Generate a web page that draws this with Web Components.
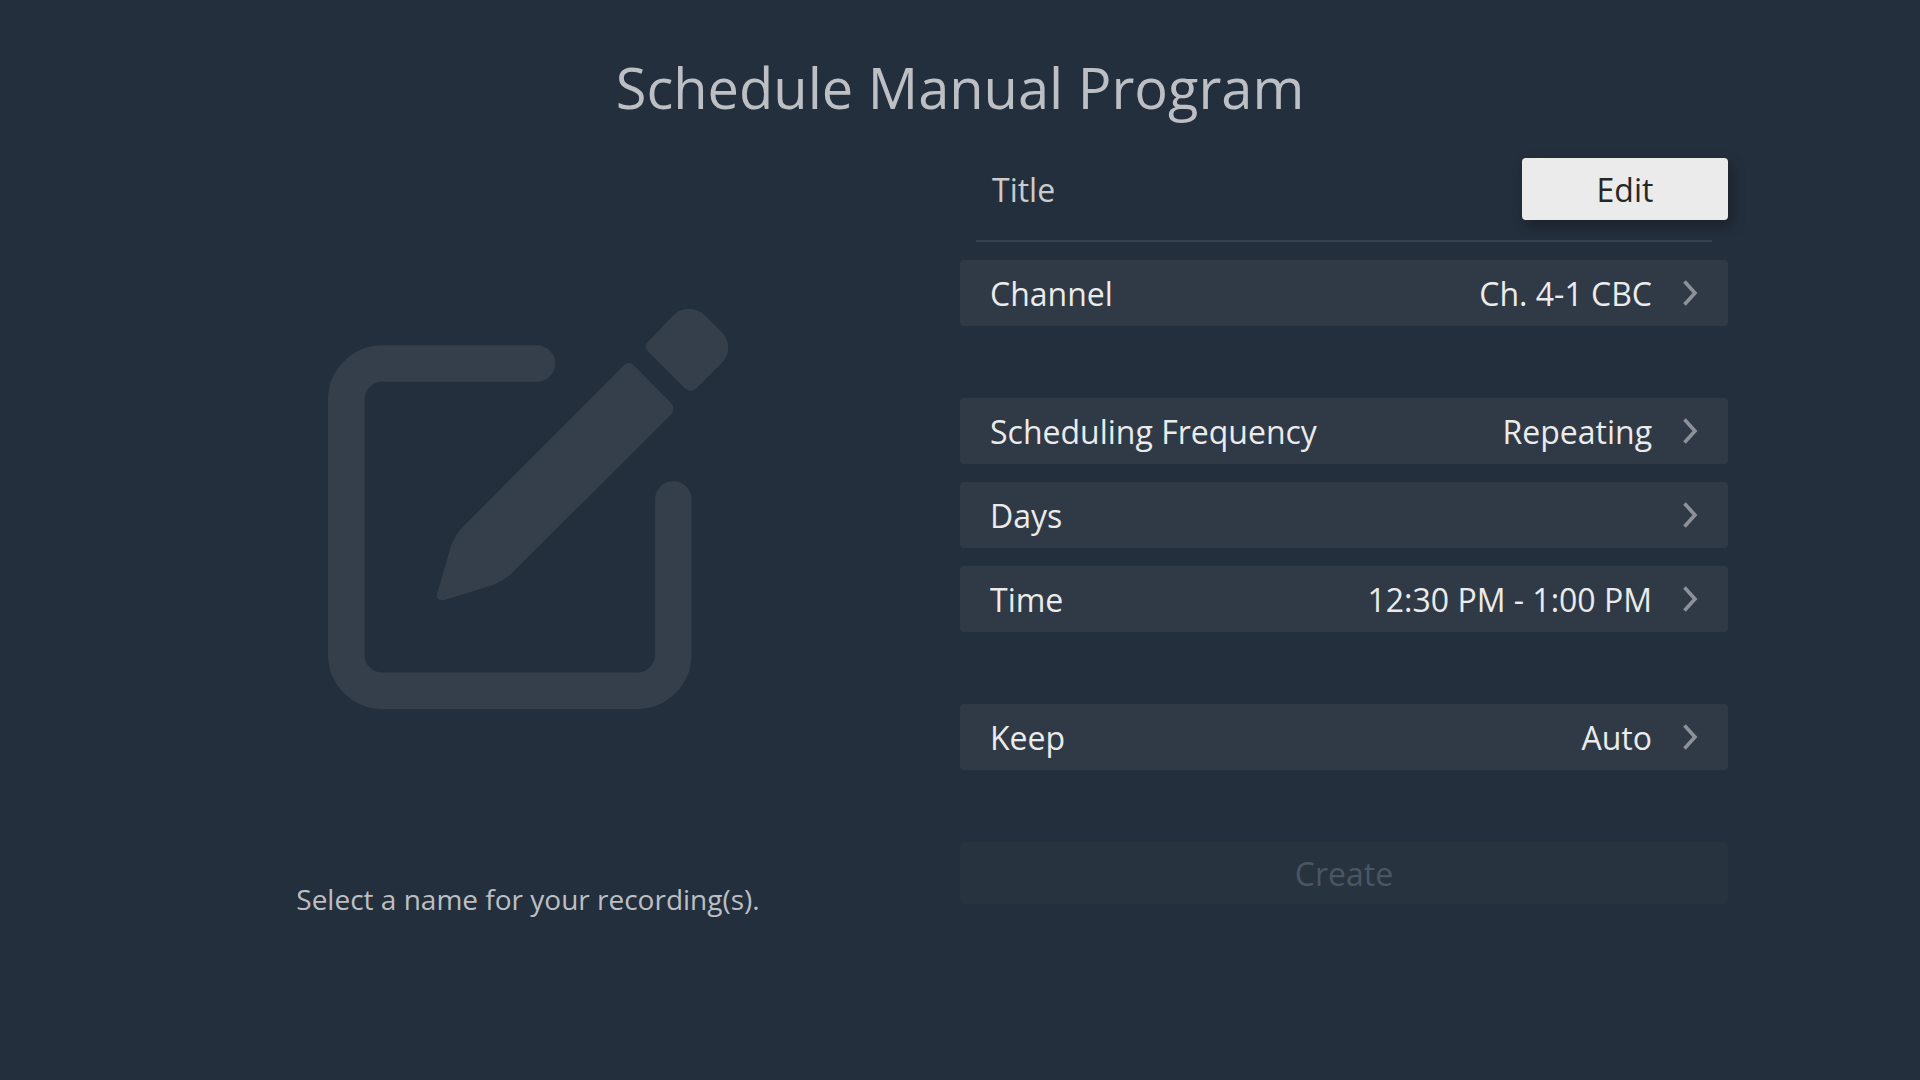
<!DOCTYPE html>
<html lang="en">
<head>
<meta charset="utf-8">
<meta name="viewport" content="width=device-width, initial-scale=1">
<title>Schedule Manual Program</title>
<style>
  html { background: #242f3d; }
  body {
    margin: 0;
    min-height: 100vh;
    font-family: "Open Sans", "Noto Sans", sans-serif;
    color: #ebebeb;
  }
</style>
</head>
<body>
<schedule-screen>
  <span slot="heading">Schedule Manual Program</span>
  <edit-art slot="aside"></edit-art>
  <span slot="hint">Select a name for your recording(s).</span>
  <title-field slot="form" action="Edit">Title</title-field>
  <option-group slot="form">
    <option-row value="Ch. 4-1 CBC">Channel</option-row>
  </option-group>
  <option-group slot="form">
    <option-row value="Repeating">Scheduling Frequency</option-row>
    <option-row>Days</option-row>
    <option-row value="12:30 PM - 1:00 PM">Time</option-row>
  </option-group>
  <option-group slot="form">
    <option-row value="Auto">Keep</option-row>
  </option-group>
  <push-button slot="form" disabled>Create</push-button>
</schedule-screen>

<script>
  function define(name, html, setup) {
    const template = document.createElement('template');
    template.innerHTML = html;
    customElements.define(name, class extends HTMLElement {
      constructor() {
        super();
        this.attachShadow({ mode: 'open' }).append(template.content.cloneNode(true));
      }
      connectedCallback() {
        if (setup) setup(this, this.shadowRoot);
      }
    });
  }

  // Page frame: heading on top, picture and hint on the left, form on the right
  define('schedule-screen', `
    <style>
      :host { display: block; padding: 48px 0; }
      h1 {
        margin: 0 0 32px;
        font-size: 56px; line-height: 78px; font-weight: 400;
        text-align: center; color: #bcbfc4;
      }
      .columns { display: grid; grid-template-columns: 9fr 8fr; padding: 0 10% 0 5%; }
      aside { display: flex; flex-direction: column; align-items: center; padding-top: 151px; }
      p { margin: 166px 0 0; font-size: 28px; line-height: 48px; color: #bcbfc4; }
      form { display: flex; flex-direction: column; }
    </style>
    <header><h1><slot name="heading"></slot></h1></header>
    <main class="columns">
      <aside><slot name="aside"></slot><p><slot name="hint"></slot></p></aside>
      <form><slot name="form"></slot></form>
    </main>`);

  // Pencil over an open square
  define('edit-art', `
    <style>
      :host { display: block; width: 400px; color: #353f4b; }
      svg { display: block; width: 100%; }
    </style>
    <svg viewBox="0 0 400 400" fill="currentColor" aria-hidden="true">
      <path d="M209 54.5H54.6A36.4 36.4 0 0 0 18.2 90.9V345.4A36.4 36.4 0 0 0 54.6 381.8H309A36.4 36.4 0 0 0 345.3 345.4V190.4" fill="none" stroke="currentColor" stroke-width="36.4" stroke-linecap="round"/>
      <path d="M295.3 56.7Q300.8 51.5 306.3 56.7L343.7 94.7Q347.5 99.7 343.7 104.7L183.7 264.3Q174.7 273 162 277L118.7 290.3C111 293 107.5 289 109.3 284L123 237Q126.7 226 136 216.7Z"/>
      <path d="M320 32.7L345.3 6.3C354 -2.3 368 -2.3 376 5.7L394.7 24.3C402 31.7 402 45 394.7 53L368.7 79Q362.7 85 356.7 79L320 42.3Q315.3 37.3 320 32.7Z"/>
    </svg>`);

  define('push-button', `
    <style>
      :host { display: block; }
      button {
        display: block; box-sizing: border-box; width: 100%; height: 62px;
        margin: 0; padding: 2px 32px 0; border: 0; border-radius: 4px;
        font: inherit; font-size: 32px; line-height: 44px;
        background: #ebebeb; color: #262626;
        box-shadow: 4px 6px 14px rgba(0, 0, 0, .3);
      }
      button:disabled { background: #27333f; color: #4c5562; box-shadow: none; }
    </style>
    <button type="button"><slot></slot></button>`,
    (host, root) => {
      root.querySelector('button').disabled = host.hasAttribute('disabled');
    });

  define('title-field', `
    <style>
      :host {
        display: flex; align-items: center; justify-content: space-between;
        padding: 0 0 22px 32px; margin-bottom: 18px;
        background: linear-gradient(#37424f, #37424f) center bottom / calc(100% - 32px) 2px no-repeat;
        font-size: 32px; line-height: 44px; color: #cbcbcb;
      }
      .label { padding-top: 2px; }
      push-button { width: 206px; }
    </style>
    <span class="label"><slot></slot></span><push-button></push-button>`,
    (host, root) => {
      root.querySelector('push-button').textContent = host.getAttribute('action');
    });

  define('option-group', `
    <style>
      :host { display: flex; flex-direction: column; gap: 18px; margin-bottom: 72px; }
    </style>
    <slot></slot>`);

  define('option-row', `
    <style>
      :host { display: block; }
      button {
        display: flex; align-items: center; box-sizing: border-box;
        width: 100%; height: 66px; margin: 0; padding: 0 30px;
        border: 0; border-radius: 4px; background: #303a46; color: inherit;
        font: inherit; font-size: 32px; line-height: 44px; text-align: left;
      }
      .label, .value { padding-top: 2px; }
      .label { flex: 1; }
      svg { width: 16px; height: 28px; margin-left: 30px; color: #8d9299; }
    </style>
    <button type="button">
      <span class="label"><slot></slot></span>
      <span class="value"></span>
      <svg viewBox="0 0 16 28" fill="none" stroke="currentColor" stroke-width="3.6" aria-hidden="true"><path d="M2.5 2.5L13 14L2.5 25.5"/></svg>
    </button>`,
    (host, root) => {
      root.querySelector('.value').textContent = host.getAttribute('value') || '';
    });
</script>
</body>
</html>
